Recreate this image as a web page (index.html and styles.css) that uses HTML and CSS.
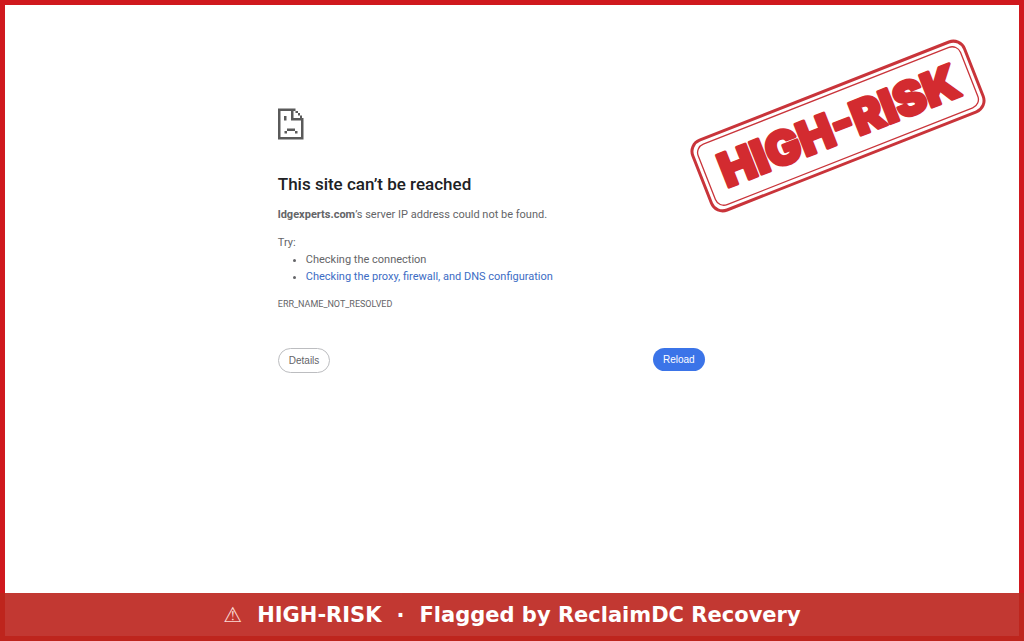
FILE: index.html
```html
<!DOCTYPE html>
<html lang="en">
<head>
<meta charset="utf-8">
<meta name="viewport" content="width=device-width, initial-scale=1">
<title>This site can’t be reached</title>
<link rel="stylesheet" href="styles.css">
</head>
<body>
<main class="page">
  <section class="error">
    <svg class="sad-page" viewBox="0 0 26 32" aria-hidden="true">
      <path fill="#5a5a5a" fill-rule="evenodd" d="M0 .5H17.500V3H20V5H22V7.500H24V10H25.500V31.500H0ZM2.500 3V29H23V12.500H13V3ZM15.500 3V10H22V7.500H20V5H17.500V3Z"/>
      <path fill="#5a5a5a" d="M6 8H8.500V12.500H6ZM9 20.500H17V23H9ZM6.500 23H9V25.500H6.500ZM17 23H19.500V25.500H17Z"/>
    </svg>
    <h1 class="title">This site can’t be reached</h1>
    <p class="summary"><strong>ldgexperts.com</strong>’s server IP address could not be found.</p>
    <p class="try">Try:</p>
    <ul class="tips">
      <li>Checking the connection</li>
      <li><a class="link" href="#details">Checking the proxy, firewall, and DNS configuration</a></li>
    </ul>
    <p class="code">ERR_NAME_NOT_RESOLVED</p>
    <div class="actions" id="details">
      <button class="btn btn-outline" type="button">Details</button>
      <button class="btn btn-primary" type="button">Reload</button>
    </div>
  </section>
  <svg class="stamp" viewBox="0 0 300 180" role="img" aria-label="High-risk stamp">
    <g transform="rotate(-21.500 150 90)" fill="none" stroke="#c9343a">
      <rect x="4" y="52.500" width="292" height="75" rx="12" stroke-width="3"/>
      <rect x="9" y="57.500" width="282" height="65" rx="9" stroke-width="1.300"/>
      <text class="stamp-text" x="151" y="107" text-anchor="middle">HIGH-RISK</text>
    </g>
  </svg>
</main>
<footer class="banner"><span class="warn">⚠</span><span>HIGH-RISK</span><span>·</span><span>Flagged by ReclaimDC Recovery</span></footer>
</body>
</html>
```
FILE: styles.css
```css
* { box-sizing: border-box; }

body {
  margin: 0;
  min-height: 100vh;
  display: flex;
  flex-direction: column;
  background: #fff;
  color: #646568;
  font: 11px/17px Roboto, "Liberation Sans", sans-serif;
}

.page {
  position: relative;
  flex: 1;
  border: 5px solid #d0191e;
  border-bottom: 0;
}

.error {
  width: 42.1%;
  min-width: 320px;
  margin-left: 26.9%;
  padding-top: 103px;
}

.sad-page {
  display: block;
  width: 26px;
  height: 32px;
}

.title {
  margin: 32px 0 0;
  color: #202124;
  font-size: 17px;
  line-height: 24px;
  font-weight: 500;
}

.summary { margin: 10px 0 11px; }
.try { margin: 0; }

.tips {
  margin: 0;
  padding-left: 28px;
}

.link {
  color: #3c6cc4;
  text-decoration: none;
}

.code {
  margin: 11px 0 0;
  font-size: 9px;
}

.actions {
  display: flex;
  justify-content: space-between;
  align-items: flex-start;
  margin-top: 35px;
}

.btn {
  height: 23px;
  padding: 0 10px;
  border: 0;
  border-radius: 12px;
  font: 10px/12px "Liberation Sans", Arial, sans-serif;
}

.btn-outline {
  height: 25px;
  border: 1px solid #bcbdc0;
  border-radius: 13px;
  background: #fff;
  color: #646568;
}

.btn-primary {
  background: #3b74e8;
  color: #fff;
}

.stamp {
  position: absolute;
  top: 31px;
  right: 31px;
  width: 300px;
  height: 180px;
}

.stamp-text {
  fill: #d32b30;
  stroke: #d32b30;
  stroke-width: 3px;
  stroke-linejoin: round;
  font: 900 47px Inter, "Liberation Sans", sans-serif;
}

.banner {
  display: flex;
  justify-content: center;
  gap: 15px;
  padding: 10px 0 9px;
  border: 5px solid #be251d;
  border-top: 0;
  background: #c23832;
  color: #fff;
  font: bold 21px/24px "DejaVu Sans", sans-serif;
}

.warn { color: #fbd9d2; }
```
